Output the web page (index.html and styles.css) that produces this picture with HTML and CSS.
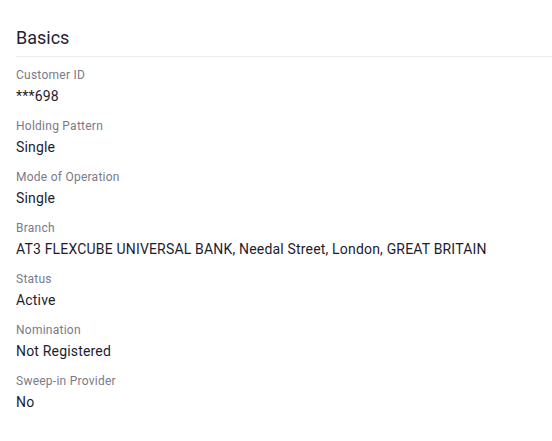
FILE: index.html
```html
<!DOCTYPE html>
<html>
<head>
<meta charset="utf-8">
<link rel="stylesheet" href="styles.css">
</head>
<body>
<section class="panel">
  <h2 class="title">Basics</h2>
  <dl class="fields">
    <div class="field"><dt>Customer ID</dt><dd>***698</dd></div>
    <div class="field"><dt>Holding Pattern</dt><dd>Single</dd></div>
    <div class="field"><dt>Mode of Operation</dt><dd>Single</dd></div>
    <div class="field"><dt>Branch</dt><dd>AT3 FLEXCUBE UNIVERSAL BANK, Needal Street, London, GREAT BRITAIN</dd></div>
    <div class="field"><dt>Status</dt><dd>Active</dd></div>
    <div class="field"><dt>Nomination</dt><dd>Not Registered</dd></div>
    <div class="field"><dt>Sweep-in Provider</dt><dd>No</dd></div>
  </dl>
</section>
</body>
</html>
```
FILE: styles.css
```css
html, body {
  margin: 0;
  padding: 0;
  background: #ffffff;
}
body {
  font-family: Roboto, "Noto Sans", sans-serif;
}
.panel {
  padding-left: 16px;
}
.title {
  margin: 0;
  padding-top: 26px;
  padding-bottom: 6px;
  font-size: 18px;
  line-height: 24px;
  font-weight: 400;
  color: #232336;
  border-bottom: 1px solid #ebebeb;
}
.fields {
  margin: 0;
  padding-top: 10px;
  display: flex;
  flex-direction: column;
  gap: 11px;
}
.field {
  display: flex;
  flex-direction: column;
  gap: 3px;
}
.field dt {
  font-size: 12px;
  line-height: 16px;
  letter-spacing: 0.25px;
  color: #7a7a88;
}
.field dd {
  margin: 0;
  font-size: 14px;
  line-height: 21px;
  letter-spacing: 0.18px;
  color: #1d1d2e;
}
```
